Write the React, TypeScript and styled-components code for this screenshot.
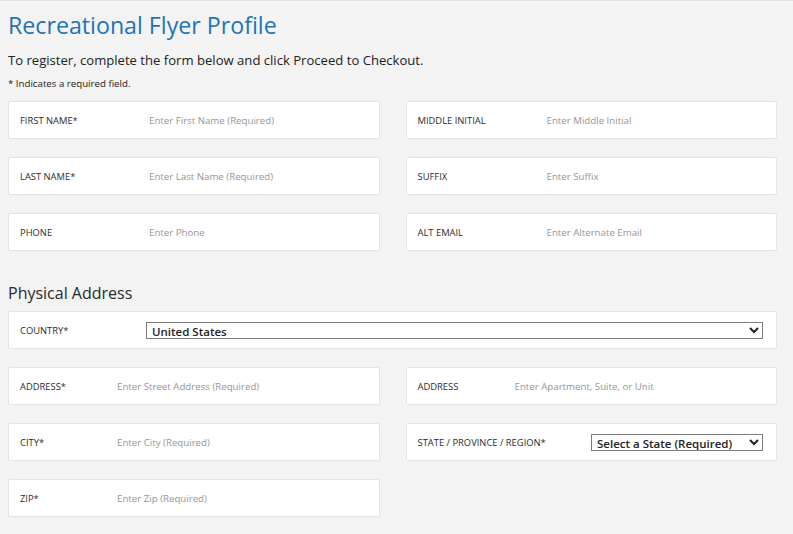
import React from "react";
import styled, { createGlobalStyle } from "styled-components";

const GlobalStyle = createGlobalStyle`
  html, body {
    margin: 0;
    padding: 0;
    background: #f3f3f3;
  }
  body {
    font-family: "Open Sans", "Liberation Sans", sans-serif;
    color: #222;
  }
`;

const Page = styled.div`
  min-height: 534px;
  box-sizing: border-box;
  padding: 0 16px 16px 8px;
  border-top: 1px solid #e2e2e2;
  background: #f3f3f3;
`;

const Title = styled.h1`
  margin: 8px 0 0;
  font-size: 23.2px;
  font-weight: 400;
  line-height: 32px;
  color: #1f74b8;
`;

const Intro = styled.p`
  margin: 10px 0 0;
  font-size: 13.1px;
  line-height: 18px;
  color: #222;
`;

const Note = styled.p`
  margin: 8px 0 0;
  font-size: 9.7px;
  line-height: 14px;
  color: #222;
`;

const SectionTitle = styled.h2`
  margin: 31px 0 0;
  font-size: 16px;
  font-weight: 400;
  line-height: 22px;
  color: #2a2a2a;
`;

const FieldGrid = styled.div<{ $offset: number }>`
  display: grid;
  grid-template-columns: 1fr 1fr;
  column-gap: 26px;
  row-gap: 18px;
  margin-top: ${(p) => p.$offset}px;
`;

const Card = styled.div<{ $wide?: boolean }>`
  grid-column: ${(p) => (p.$wide ? "1 / -1" : "auto")};
  height: 38px;
  box-sizing: border-box;
  display: flex;
  align-items: center;
  padding: 0 13px 0 11px;
  background: #fff;
  border: 1px solid #e4e4e4;
  border-radius: 2px;
`;

const Label = styled.label<{ $width: number }>`
  flex: 0 0 ${(p) => p.$width}px;
  font-size: 9.4px;
  font-weight: 500;
  color: #2b2b2b;
  text-transform: uppercase;
`;

const TextInput = styled.input`
  flex: 1;
  min-width: 0;
  border: none;
  outline: none;
  padding: 0 2px;
  background: transparent;
  font-family: inherit;
  font-size: 9.7px;
  color: #333;
  &::placeholder {
    color: #959595;
  }
`;

const Select = styled.select<{ $width?: number }>`
  ${(p) => (p.$width ? `width: ${p.$width}px; margin-left: auto;` : "flex: 1;")}
  height: 17px;
  box-sizing: border-box;
  padding: 0 1px;
  border: 1px solid #7a7a7a;
  border-radius: 0;
  background: #fff;
  font-family: inherit;
  font-size: 11.5px;
  font-weight: 600;
  color: #222;
`;

type Field = { label: string; placeholder: string };

const profileFields: Field[] = [
  { label: "First Name*", placeholder: "Enter First Name (Required)" },
  { label: "Middle Initial", placeholder: "Enter Middle Initial" },
  { label: "Last Name*", placeholder: "Enter Last Name (Required)" },
  { label: "Suffix", placeholder: "Enter Suffix" },
  { label: "Phone", placeholder: "Enter Phone" },
  { label: "Alt Email", placeholder: "Enter Alternate Email" },
];

const TextField: React.FC<Field & { labelWidth: number }> = ({
  label,
  placeholder,
  labelWidth,
}) => (
  <Card>
    <Label $width={labelWidth}>{label}</Label>
    <TextInput placeholder={placeholder} />
  </Card>
);

export default function App() {
  return (
    <Page>
      <GlobalStyle />
      <Title>Recreational Flyer Profile</Title>
      <Intro>
        To register, complete the form below and click Proceed to Checkout.
      </Intro>
      <Note>* Indicates a required field.</Note>

      <FieldGrid $offset={10}>
        {profileFields.map((f) => (
          <TextField key={f.label} {...f} labelWidth={127} />
        ))}
      </FieldGrid>

      <SectionTitle>Physical Address</SectionTitle>
      <FieldGrid $offset={7}>
        <Card $wide>
          <Label $width={126}>Country*</Label>
          <Select defaultValue="US">
            <option value="US">United States</option>
            <option value="CA">Canada</option>
          </Select>
        </Card>
        <TextField
          label="Address*"
          placeholder="Enter Street Address (Required)"
          labelWidth={95}
        />
        <TextField
          label="Address"
          placeholder="Enter Apartment, Suite, or Unit"
          labelWidth={95}
        />
        <TextField
          label="City*"
          placeholder="Enter City (Required)"
          labelWidth={95}
        />
        <Card>
          <Label $width={160}>State / Province / Region*</Label>
          <Select $width={172} defaultValue="">
            <option value="">Select a State (Required)</option>
          </Select>
        </Card>
        <TextField
          label="Zip*"
          placeholder="Enter Zip (Required)"
          labelWidth={95}
        />
      </FieldGrid>
    </Page>
  );
}
